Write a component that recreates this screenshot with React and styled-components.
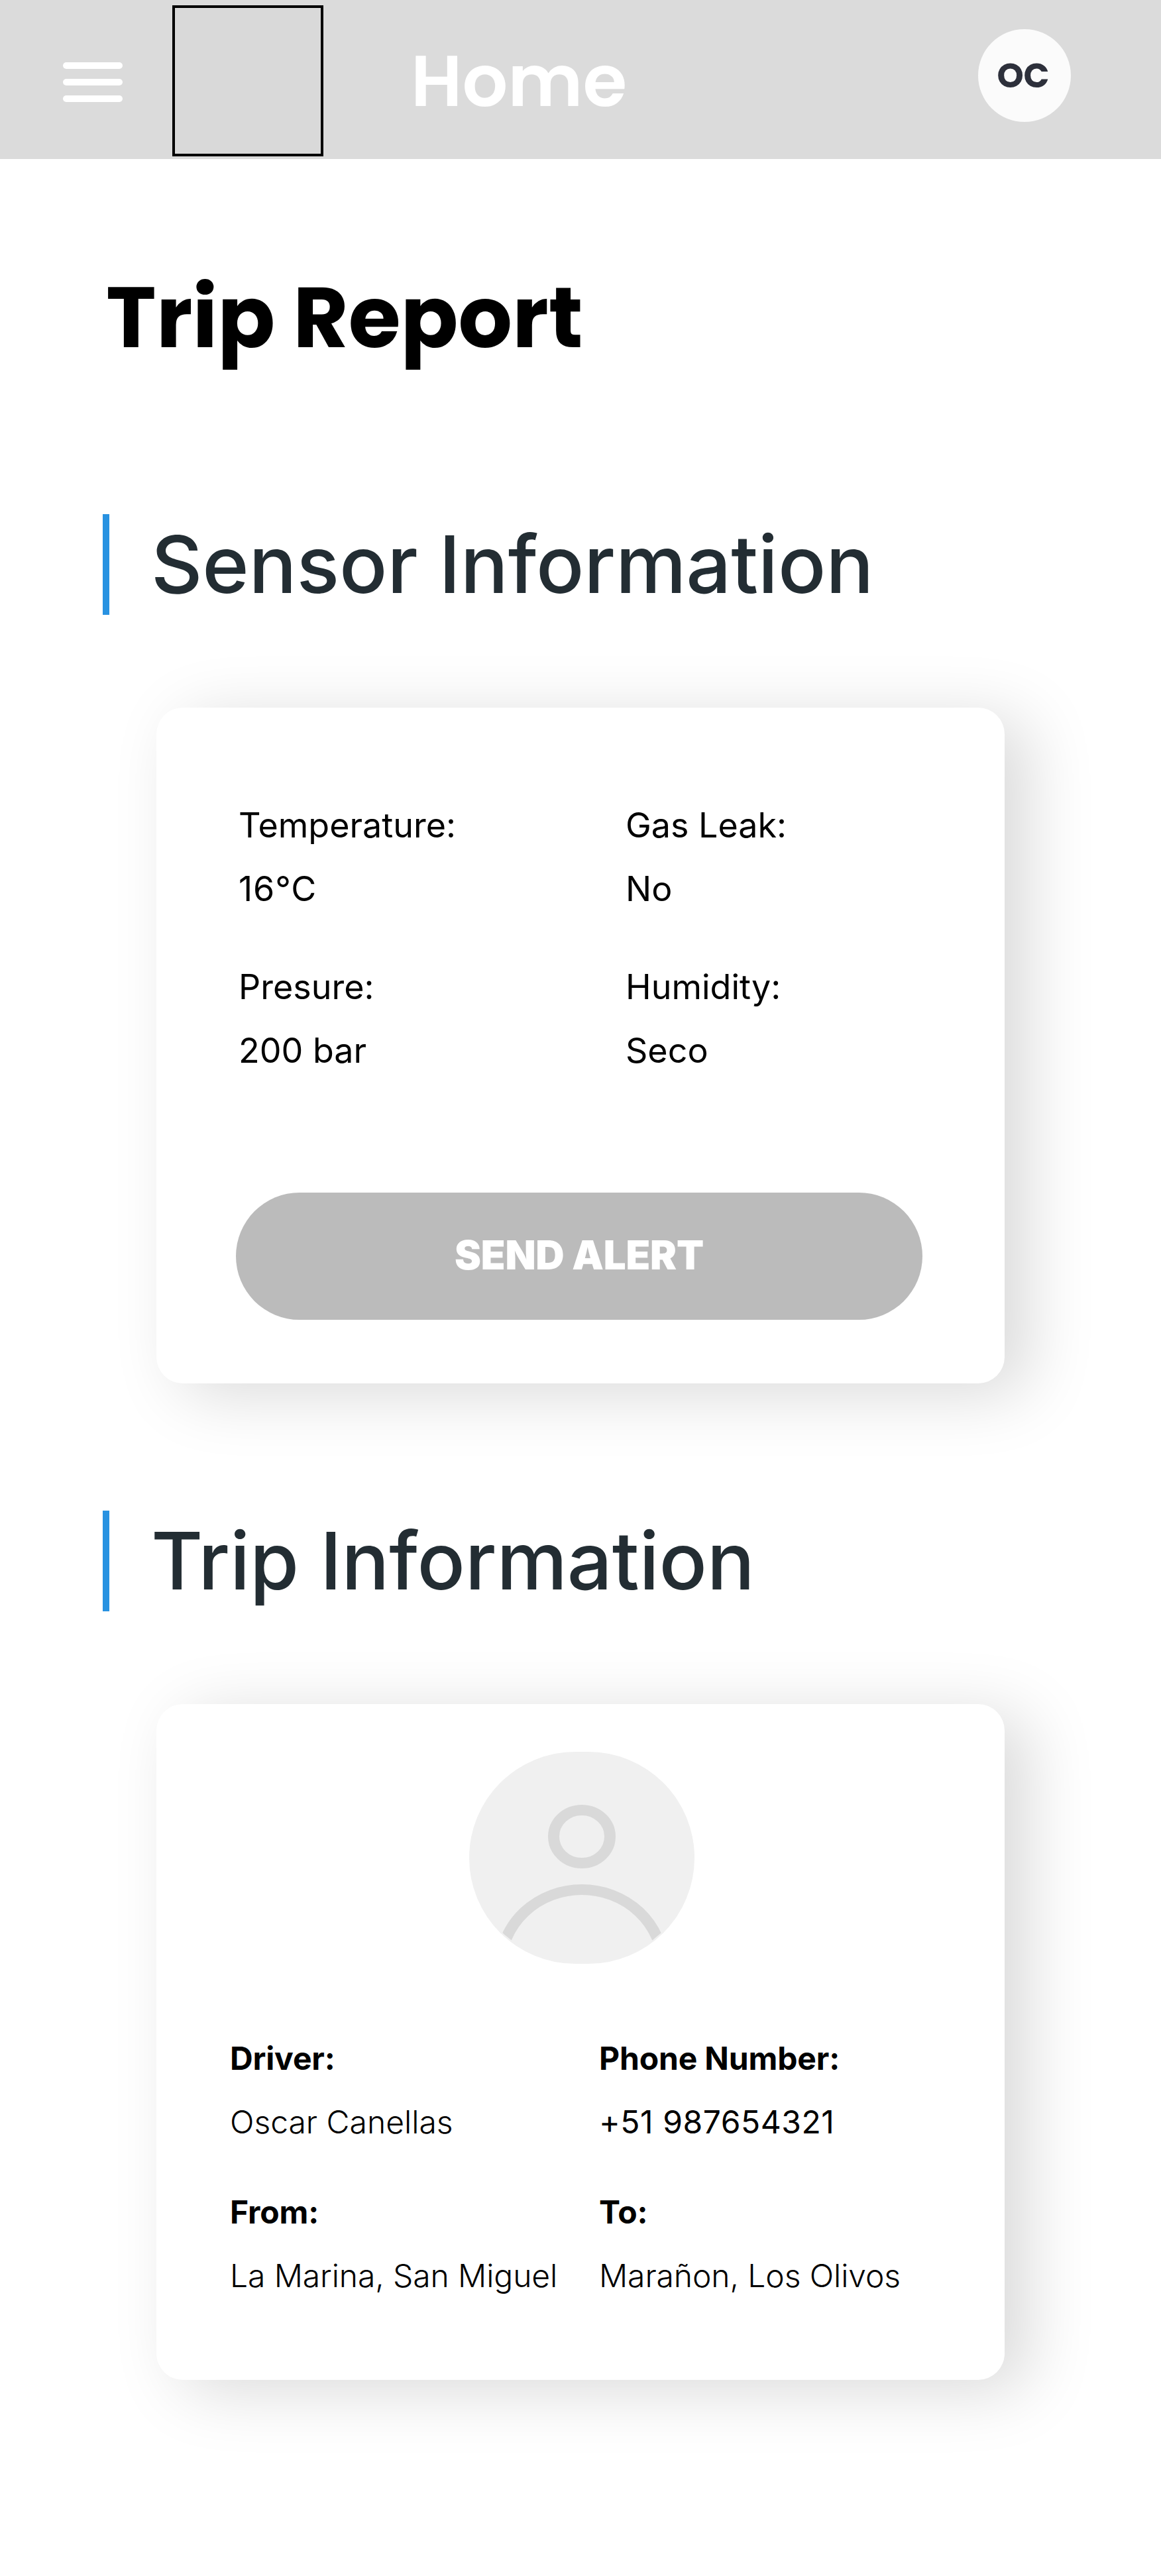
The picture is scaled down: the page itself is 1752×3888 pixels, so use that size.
import React from 'react';
import styled, { createGlobalStyle } from 'styled-components';

const GlobalStyle = createGlobalStyle`
  *, *::before, *::after { box-sizing: border-box; }
  body { margin: 0; background: #fff; font-family: Inter, "Liberation Sans", sans-serif; color: #000; }
  h1, h2, p, dl, dt, dd { margin: 0; font-weight: inherit; }
`;

const Page = styled.div`
  width: 1752px;
  height: 3888px;
  overflow: hidden;
  background: #fff;
`;

const Header = styled.header`
  display: flex;
  align-items: center;
  height: 240px;
  padding: 0 136px 0 95px;
  background: #dbdbdb;
`;

const MenuButton = styled.button`
  display: flex;
  flex-direction: column;
  gap: 15px;
  width: 90px;
  margin: 8px 0 0;
  padding: 0;
  border: 0;
  background: none;
`;

const MenuBar = styled.span`
  height: 10px;
  border-radius: 5px;
  background: #fff;
`;

const LogoBox = styled.div`
  width: 228px;
  height: 228px;
  margin: 4px 0 0 75px;
  border: 4px solid #000;
  background: #d9d9d9;
`;

const HeaderTitle = styled.p`
  margin: 5px 0 0 132px;
  font: 600 108px/160px Poppins, Inter, sans-serif;
  color: #fff;
`;

const Initials = styled.div`
  display: flex;
  align-items: center;
  justify-content: center;
  width: 140px;
  height: 140px;
  margin: 0 0 12px auto;
  padding-right: 4px;
  border-radius: 50%;
  background: #fbfbfb;
  font: 700 51.2px/76px Poppins, Inter, sans-serif;
  color: #2d303b;
`;

const Main = styled.main`
  padding: 144px 236px 0 155px;
`;

const PageTitle = styled.h1`
  padding-left: 5px;
  font: 700 128px/192px Poppins, Inter, sans-serif;
`;

const Section = styled.section`
  margin-top: ${(p) => p.$gap}px;
`;

const SectionTitle = styled.h2`
  height: 152px;
  padding-left: 63px;
  border-left: 10px solid #2892e1;
  font-size: 120px;
  font-weight: 500;
  line-height: 152px;
  letter-spacing: -0.2px;
  white-space: nowrap;
  color: #232d33;
`;

const Card = styled.div`
  width: 1280px;
  height: 1020px;
  margin: 140px 0 0 81px;
  padding-top: ${(p) => p.$top}px;
  border-radius: 40px;
  background: #fff;
  box-shadow: 36px 16px 100px rgba(0, 0, 0, 0.15);
`;

const Fields = styled.dl`
  display: grid;
  grid-template-columns: ${(p) => p.$column}px 1fr;
  row-gap: ${(p) => p.$rowGap}px;
  padding-left: ${(p) => p.$left}px;
  font-size: ${(p) => p.$size}px;
  line-height: 96px;
  white-space: nowrap;
`;

const Label = styled.dt`
  font-weight: ${(p) => (p.$bold ? 700 : 400)};
  letter-spacing: ${(p) => (p.$bold ? -0.15 : 0)}px;
`;

const Value = styled.dd`
  font-weight: ${(p) => (p.$light ? 300 : 400)};
  letter-spacing: ${(p) => p.$tracking || 0}px;
`;

const AlertButton = styled.button`
  display: flex;
  align-items: center;
  justify-content: center;
  width: 1036px;
  height: 192px;
  margin: 166px 0 0 120px;
  padding: 0 0 4px;
  border: 0;
  border-radius: 96px;
  background: #bbb;
  font: 900 60px/72px Inter, sans-serif;
  letter-spacing: -0.2px;
  color: #fff;
`;

const Portrait = styled.div`
  width: 340px;
  height: 320px;
  margin: 0 0 95px 472px;
  border-radius: 160px;
  overflow: hidden;
  background: #f0f0f0;
`;

const PortraitIcon = styled.svg`
  display: block;
  width: 100%;
  height: 100%;
`;

const sensorFields = [
  { label: 'Temperature:', value: '16°C', tracking: 0.9 },
  { label: 'Gas Leak:', value: 'No' },
  { label: 'Presure:', value: '200 bar' },
  { label: 'Humidity:', value: 'Seco' },
];

const tripFields = [
  { label: 'Driver:', value: 'Oscar Canellas', light: true },
  { label: 'Phone Number:', value: '+51 987654321', tracking: 0.55 },
  { label: 'From:', value: 'La Marina, San Miguel', light: true, tracking: -0.1 },
  { label: 'To:', value: 'Marañon, Los Olivos', light: true, tracking: -0.1 },
];

function Field({ label, value, bold, light, tracking }) {
  return (
    <div>
      <Label $bold={bold}>{label}</Label>
      <Value $light={light} $tracking={tracking}>{value}</Value>
    </div>
  );
}

export default function App() {
  return (
    <Page>
      <GlobalStyle />
      <Header>
        <MenuButton aria-label="Menu">
          <MenuBar />
          <MenuBar />
          <MenuBar />
        </MenuButton>
        <LogoBox />
        <HeaderTitle>Home</HeaderTitle>
        <Initials>OC</Initials>
      </Header>
      <Main>
        <PageTitle>Trip Report</PageTitle>
        <Section $gap={200}>
          <SectionTitle>Sensor Information</SectionTitle>
          <Card $top={130}>
            <Fields $column={584} $rowGap={52} $left={124} $size={52}>
              {sensorFields.map((f) => <Field key={f.label} {...f} />)}
            </Fields>
            <AlertButton>SEND ALERT</AlertButton>
          </Card>
        </Section>
        <Section $gap={192}>
          <SectionTitle>Trip Information</SectionTitle>
          <Card $top={72}>
            <Portrait>
              <PortraitIcon viewBox="0 0 20 20" preserveAspectRatio="none">
                <clipPath id="portrait"><circle cx="10" cy="10" r="9.98" /></clipPath>
                <g clipPath="url(#portrait)" fill="none" stroke="#d9d9d9" strokeWidth="1">
                  <circle cx="10" cy="8" r="2.5" />
                  <circle cx="10" cy="20.2" r="7.2" />
                </g>
              </PortraitIcon>
            </Portrait>
            <Fields $column={557} $rowGap={40} $left={111} $size={48}>
              {tripFields.map((f) => <Field key={f.label} bold {...f} />)}
            </Fields>
          </Card>
        </Section>
      </Main>
    </Page>
  );
}
